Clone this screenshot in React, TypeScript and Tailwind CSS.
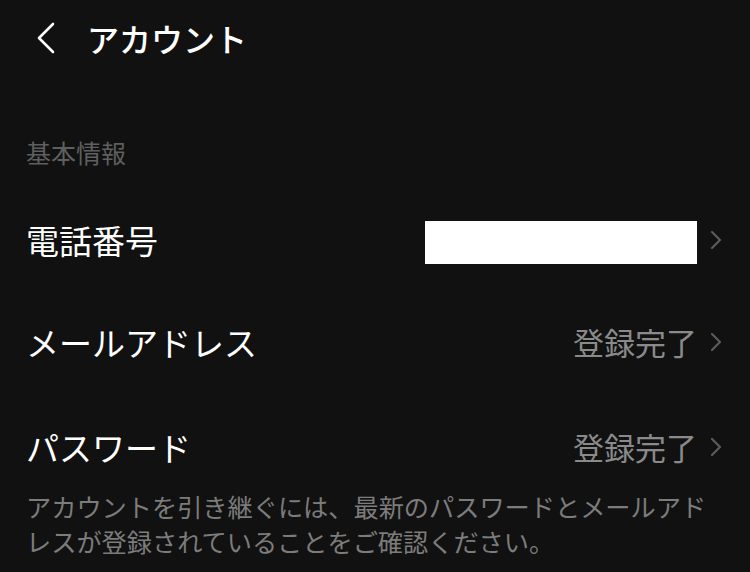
import { ReactNode } from "react"

const FONT = { fontFamily: '"Noto Sans CJK JP", "Noto Sans", sans-serif' }

function Chevron() {
	return (
		<svg width="14" height="22" viewBox="0 0 14 22" className="shrink-0">
			<path d="M3 3 L11 11 L3 19" fill="none" stroke="#5c5c5c" strokeWidth="2.2" strokeLinecap="round" strokeLinejoin="round" />
		</svg>
	)
}

function Row({ label, children, className }: { label: string; children: ReactNode; className: string }) {
	return (
		<div className={`flex items-center justify-between pl-[26px] pr-[27px] ${className}`}>
			<span className="text-[33px] leading-[40px] text-white">{label}</span>
			<div className="flex items-center gap-[12px]">
				{children}
				<Chevron />
			</div>
		</div>
	)
}

export default function App() {
	return (
		<div className="w-[750px] h-[572px] overflow-hidden bg-[#111111]" style={FONT}>
			{/* header */}
			<div className="h-[76px] flex items-center pl-[34px]">
				<svg width="24" height="34" viewBox="0 0 24 34" className="shrink-0">
					<path d="M19 3 L5 17 L19 31" fill="none" stroke="#ffffff" strokeWidth="2.6" strokeLinecap="round" strokeLinejoin="round" />
				</svg>
				<span className="ml-[29px] text-[32px] leading-[40px] font-medium text-white">アカウント</span>
			</div>

			{/* section */}
			<div className="pt-[58px] pl-[26px] text-[25px] leading-[36px] text-[#5f5f5f]">基本情報</div>

			<div className="mt-[19px]">
				<Row label="電話番号" className="h-[102px]">
					<div className="w-[272px] h-[43px] mt-[4px] bg-white" />
				</Row>
				<Row label="メールアドレス" className="h-[102px]">
					<span className="text-[31px] leading-[40px] text-[#8a8a8a]">登録完了</span>
				</Row>
				<Row label="パスワード" className="pt-[34px] pb-[0px]">
					<span className="text-[31px] leading-[40px] text-[#8a8a8a]">登録完了</span>
				</Row>
			</div>

			<p className="mt-[22px] pl-[26px] pr-[30px] text-[25.2px] leading-[35px] text-[#7c7c7c]">
				アカウントを引き継ぐには、最新のパスワードとメールアドレスが登録されていることをご確認ください。
			</p>
		</div>
	)
}
